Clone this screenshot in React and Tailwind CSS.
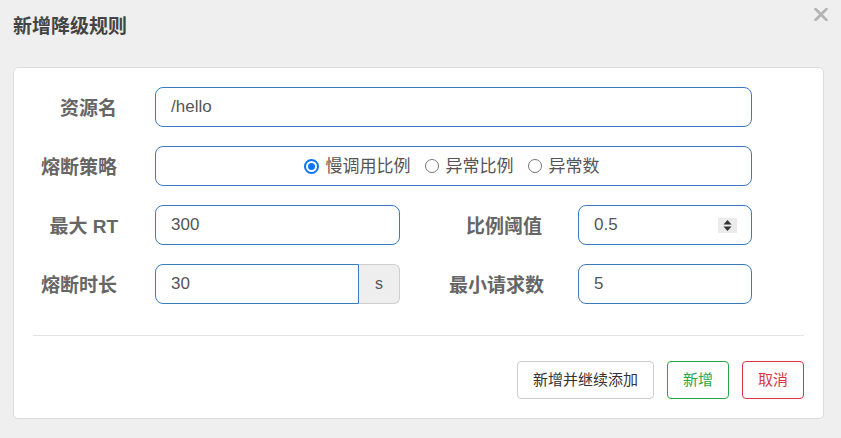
import React from "react";

const font = { fontFamily: '"Liberation Sans", "Noto Sans CJK SC", sans-serif' };

function Label({ w, children }) {
  return (
    <div
      className={`${w} shrink-0 pt-[4px] text-right text-[19px] leading-[22px] font-bold text-[#666]`}
    >
      {children}
    </div>
  );
}

function Radio({ checked, label, last }) {
  return (
    <label className={`flex items-center gap-[7px] ${last ? "" : "mr-[14px]"}`}>
      {checked ? (
        <span className="w-[15px] h-[15px] rounded-full border-[2px] border-[#0b74f0] flex items-center justify-center bg-white">
          <span className="w-[7px] h-[7px] rounded-full bg-[#0b74f0]" />
        </span>
      ) : (
        <span className="w-[14px] h-[14px] rounded-full border border-[#767676] bg-white" />
      )}
      <span className="pt-[2px] text-[17px] leading-[20px] text-[#555]">{label}</span>
    </label>
  );
}

function Field({ w, value, children }) {
  return (
    <div
      className={`${w} h-[40px] shrink-0 rounded-[8px] border border-[#3a7cc0] bg-white flex items-center pl-[15px] pr-[14px] text-[17px] text-[#555]`}
    >
      <span className="flex-1">{value}</span>
      {children}
    </div>
  );
}

export default function App() {
  return (
    <div className="w-[841px] h-[438px] bg-[#efefef] relative" style={font}>
      <button className="absolute left-[814px] top-[8px]">
        <svg width="14" height="13" viewBox="0 0 14 13">
          <path d="M1.5 1 L12.5 12 M12.5 1 L1.5 12" stroke="#b4b4b4" strokeWidth="2.6" strokeLinecap="round" />
        </svg>
      </button>

      <div className="h-[67px] pl-[13px] pt-[16px]">
        <h2 className="text-[19px] leading-[22px] font-bold text-[#444]">新增降级规则</h2>
      </div>

      <div className="ml-[13px] w-[811px] h-[352px] bg-white border border-[#dcdcdc] rounded-[5px] pt-[19px] px-[19px]">
        <div className="flex flex-col gap-[19px]">
          <div className="flex items-center">
            <Label w="w-[84px]">资源名</Label>
            <div className="ml-[38px]">
              <Field w="w-[597px]" value="/hello" />
            </div>
          </div>

          <div className="flex items-center">
            <Label w="w-[84px]">熔断策略</Label>
            <div className="ml-[38px] w-[597px] h-[40px] rounded-[8px] border border-[#3a7cc0] flex items-center justify-center pr-[4px]">
              <Radio checked label="慢调用比例" />
              <Radio label="异常比例" />
              <Radio label="异常数" last />
            </div>
          </div>

          <div className="flex items-center">
            <Label w="w-[85px]">最大 RT</Label>
            <div className="ml-[37px]">
              <Field w="w-[245px]" value="300" />
            </div>
            <Label w="w-[142px]">比例阈值</Label>
            <div className="ml-[36px]">
              <Field w="w-[174px]" value="0.5">
                <span className="w-[19px] h-[15px] bg-[#ebebeb] flex items-center justify-center">
                  <svg width="9" height="13" viewBox="0 0 9 13">
                    <path d="M4.5 1 L8.5 5.5 L0.5 5.5 Z M0.5 7.5 L8.5 7.5 L4.5 12 Z" fill="#333" />
                  </svg>
                </span>
              </Field>
            </div>
          </div>

          <div className="flex items-center">
            <Label w="w-[84px]">熔断时长</Label>
            <div className="ml-[38px] flex h-[40px]">
              <div className="w-[204px] h-[40px] rounded-l-[8px] border border-[#3a7cc0] flex items-center pl-[15px] text-[17px] text-[#555]">
                30
              </div>
              <div className="w-[41px] h-[40px] rounded-r-[6px] border border-l-0 border-[#cfcfcf] bg-[#eeeeee] flex items-center justify-center text-[16px] text-[#555]">
                s
              </div>
            </div>
            <Label w="w-[144px]">最小请求数</Label>
            <div className="ml-[34px]">
              <Field w="w-[174px]" value="5" />
            </div>
          </div>
        </div>

        <div className="mt-[31px] h-px bg-[#e3e3e3]" />

        <div className="mt-[25px] flex justify-end gap-[13px]">
          <button className="h-[38px] px-[15px] rounded-[4px] border border-[#cccccc] bg-white text-[15px] text-[#333]">
            新增并继续添加
          </button>
          <button className="h-[38px] px-[15px] rounded-[4px] border border-[#28a745] bg-white text-[15px] text-[#28a745]">
            新增
          </button>
          <button className="h-[38px] px-[15px] rounded-[4px] border border-[#dc3545] bg-white text-[15px] text-[#dc3545]">
            取消
          </button>
        </div>
      </div>
    </div>
  );
}
